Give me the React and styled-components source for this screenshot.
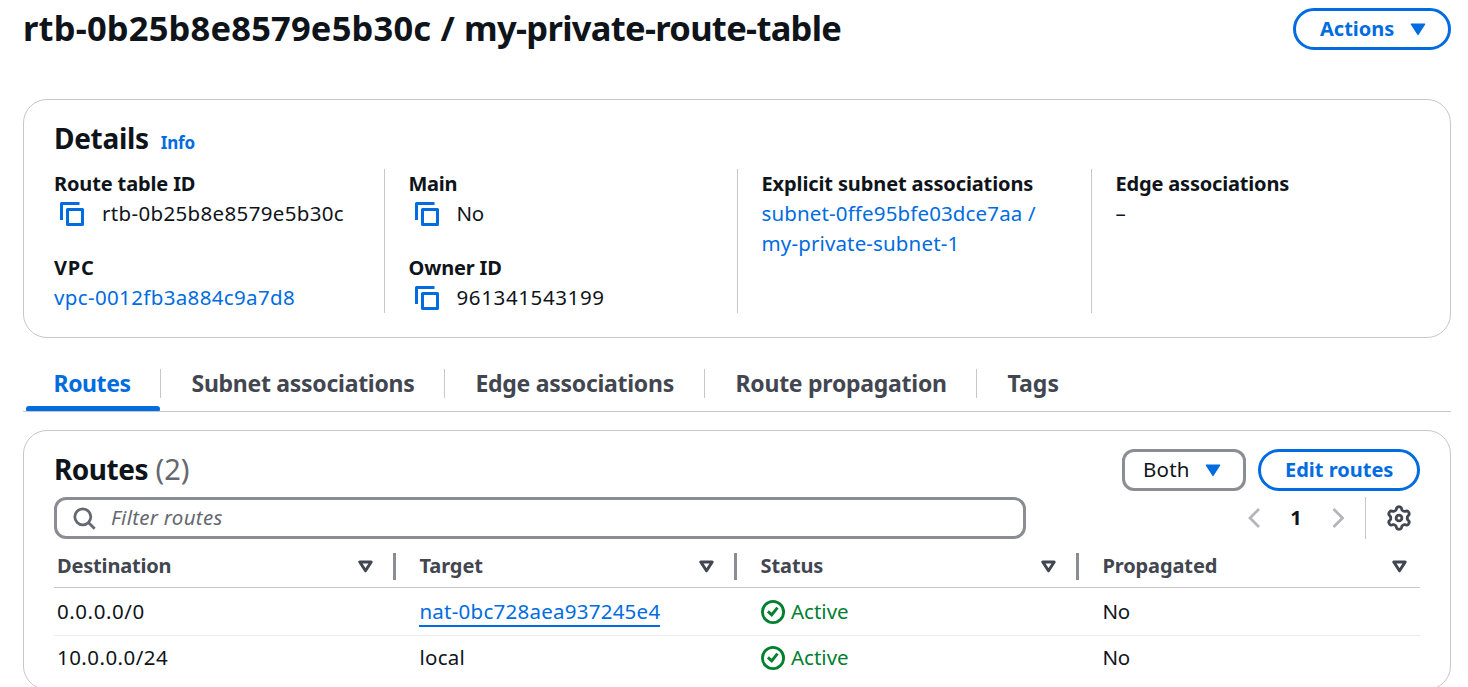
import React from 'react';
import styled, { createGlobalStyle } from 'styled-components';

const color = {
  text: '#0f141a',
  muted: '#424650',
  subtle: '#656871',
  link: '#006ce0',
  border: '#c6c6cd',
  control: '#8c8c94',
  disabled: '#b4b4bb',
  rowLine: '#ebebf0',
  success: '#00802f',
};

const GlobalStyle = createGlobalStyle`
  *, *::before, *::after { box-sizing: border-box; }
  html, body { margin: 0; background: #fff; }
  body {
    font-family: "Noto Sans", "Open Sans", sans-serif;
    font-size: 20.5px;
    line-height: 30px;
    color: ${color.text};
    overflow: hidden;
  }
  svg { display: block; flex: none; }
  button { font: inherit; }
`;

const Page = styled.main`
  width: 1468px;
  height: 687px;
  overflow: hidden;
  padding: 8px 17px 0 23px;
`;

const Spaced = styled.span`
  letter-spacing: ${(p) => p.$ls || 0}px;
  white-space: nowrap;
`;

const PageHeader = styled.header`
  display: flex;
  justify-content: space-between;
  height: 91px;
`;

const PageTitle = styled.h1`
  margin: 0;
  font-size: 34.5px;
  font-weight: 700;
  line-height: 40px;
  white-space: nowrap;
`;

const PillButton = styled.button`
  display: flex;
  align-items: center;
  gap: 16px;
  height: 42px;
  width: ${(p) => p.$width}px;
  padding: 0 0 0 24px;
  border: 3px solid ${color.link};
  border-radius: 21px;
  background: #fff;
  color: ${color.link};
  font-size: 20px;
  font-weight: 700;
`;

const SelectButton = styled(PillButton)`
  padding: 0 0 2px 18px;
  gap: 15px;
  border-color: ${color.control};
  border-radius: 12px;
  color: ${color.text};
  font-size: 20.5px;
  font-weight: 400;
  > svg { margin-top: 2px; }
`;

const Card = styled.section`
  width: 1428px;
  height: ${(p) => p.$height}px;
  border: 1px solid ${color.border};
  border-radius: 24px;
  padding: ${(p) => p.$pad};
`;

const CardTitle = styled.h2`
  display: flex;
  align-items: baseline;
  height: 36px;
  margin: ${(p) => p.$offset || 0}px 0 0;
  font-size: 28px;
  font-weight: 700;
  line-height: 36px;
`;

const InfoLink = styled.a`
  margin-left: 12px;
  font-size: 17px;
  color: ${color.link};
  letter-spacing: -0.2px;
`;

const Counter = styled.span`
  margin-left: 7.5px;
  font-size: 29px;
  font-weight: 400;
  color: ${color.subtle};
`;

const DetailGrid = styled.div`
  display: grid;
  grid-template-columns: 330px 353px 354px 1fr;
  height: 144px;
  margin-top: 13px;
`;

const DetailColumn = styled.div`
  display: flex;
  flex-direction: column;
  gap: 24px;
  &:not(:first-child) {
    border-left: 1px solid ${color.border};
    padding-left: 23.5px;
  }
`;

const DetailLabel = styled.div`
  height: 29px;
  font-size: 20px;
  font-weight: 700;
`;

const DetailValue = styled.div`
  display: flex;
  align-items: flex-start;
  gap: ${(p) => (p.$copy ? 18 : 0)}px;
  padding: 0 0 1px ${(p) => (p.$copy ? 6 : 0)}px;
  > svg { margin-top: 4px; }
`;

const TextLink = styled.a`
  color: ${color.link};
  letter-spacing: ${(p) => p.$ls || 0}px;
  box-shadow: ${(p) => (p.$underlined ? `0 2px 0 ${color.link}` : 'none')};
  line-height: ${(p) => (p.$underlined ? 28 : 30)}px;
`;

const TabBar = styled.nav`
  display: flex;
  width: 1428px;
  height: 60px;
  margin: 14px 0 18px;
  border-bottom: 1px solid ${color.border};
`;

const Tab = styled.a`
  position: relative;
  width: ${(p) => p.$width}px;
  padding: 15px 0 0 30.5px;
  font-size: 23px;
  font-weight: 700;
  line-height: 32px;
  white-space: nowrap;
  letter-spacing: ${(p) => p.$ls}px;
  color: ${(p) => (p.$active ? color.link : color.muted)};
  &:not(:last-child)::before {
    content: '';
    position: absolute;
    right: 0;
    top: 17px;
    width: 1px;
    height: 29px;
    background: ${color.border};
  }
  &::after {
    content: '';
    display: ${(p) => (p.$active ? 'block' : 'none')};
    position: absolute;
    left: 3px;
    right: 1px;
    bottom: 0;
    height: 5px;
    border-radius: 3px 3px 1px 1px;
    background: ${color.link};
  }
`;

const Toolbar = styled.div`
  display: flex;
  justify-content: space-between;
  height: 42px;
`;

const ButtonGroup = styled.div`
  display: flex;
  gap: 12px;
`;

const FilterRow = styled.div`
  display: flex;
  justify-content: space-between;
  height: 42px;
  margin-top: 6px;
`;

const FilterBox = styled.label`
  display: flex;
  align-items: center;
  gap: 15px;
  width: 972px;
  border: 3px solid ${color.control};
  border-radius: 12px;
  padding: 0 0 2px 16px;
  font-style: italic;
  color: ${color.subtle};
  > svg { margin-top: 3px; }
`;

const Pager = styled.div`
  display: flex;
  align-items: center;
  width: 172px;
  font-size: 20px;
  font-weight: 700;
`;

const PageNumber = styled.span`
  width: 72px;
  text-align: center;
`;

const PagerSettings = styled.div`
  display: flex;
  align-items: center;
  height: 42px;
  margin-left: 21px;
  padding-left: 21px;
  border-left: 1px solid ${color.border};
`;

const TableRow = styled.div`
  display: grid;
  grid-template-columns: 341px 341px 342px 342px;
  align-items: center;
  height: ${(p) => p.$height}px;
  padding-top: ${(p) => p.$top || 0}px;
  border-bottom: 1px solid ${(p) => p.$line || 'transparent'};
`;

const HeaderCell = styled.div`
  display: flex;
  align-items: center;
  justify-content: space-between;
  height: 27px;
  padding: 0 ${(p) => (p.$last ? 13.5 : 20)}px 0 ${(p) => (p.$first ? 3 : 24.5)}px;
  border-right: ${(p) => (p.$last ? 'none' : `3px solid ${color.control}`)};
  margin-right: ${(p) => (p.$last ? 0 : -1)}px;
  font-size: 20px;
  font-weight: 700;
  color: ${color.muted};
`;

const Cell = styled.div`
  display: flex;
  align-items: center;
  height: 30px;
  padding: 0 0 2px ${(p) => (p.$first ? 3 : p.$status ? 25 : 24.4)}px;
`;

const Status = styled.span`
  display: flex;
  align-items: center;
  gap: 6px;
  color: ${color.success};
  > svg { margin-top: 2px; }
`;

const Caret = () => (
  <svg width="16" height="13" viewBox="0 0 16 13">
    <path d="M1.4 1.2h13.2L8 11.4z" fill={color.link} stroke={color.link} strokeWidth="1.4" strokeLinejoin="round" />
  </svg>
);

const SortIcon = () => (
  <svg width="15" height="13" viewBox="0 0 15 13">
    <path d="M1.8 2h11.4L7.5 10.8z" fill="none" stroke={color.muted} strokeWidth="3" strokeLinejoin="round" />
  </svg>
);

const CopyIcon = () => (
  <svg width="24" height="24" viewBox="0 0 24 24" fill="none" stroke={color.link} strokeWidth="3" strokeLinejoin="round">
    <path d="M1.5 18V1.5h18" />
    <path d="M7.5 7.5h15v15h-15z" />
  </svg>
);

const SearchIcon = () => (
  <svg width="23" height="23" viewBox="0 0 23 23" fill="none" stroke={color.subtle} strokeWidth="2.8">
    <circle cx="9.8" cy="9.8" r="8" />
    <path d="M15.4 15.4l6.3 6.3" />
  </svg>
);

const Chevron = ({ right }) => (
  <svg width="12" height="20" viewBox="0 0 12 20" fill="none" stroke={color.disabled} strokeWidth="2.7">
    <path d={right ? 'M1.5 1l9 9-9 9' : 'M11 1l-9 9 9 9'} />
  </svg>
);

// Six rounded lobes, one pointing straight up.
const gearOutline = Array.from({ length: 120 }, (_, i) => {
  const a = (i / 120) * Math.PI * 2;
  const r = 9.75 - 1.6 * Math.tanh(1.7 * Math.cos(6 * a));
  return `${(12 + r * Math.cos(a)).toFixed(2)},${(12 + r * Math.sin(a)).toFixed(2)}`;
}).join(' ');

const GearIcon = () => (
  <svg width="24" height="24" viewBox="0 0 24 24" fill="none" stroke={color.muted} overflow="visible">
    <polygon points={gearOutline} strokeWidth="2.8" strokeLinejoin="round" />
    <circle cx="12" cy="12" r="2.9" strokeWidth="2.8" />
  </svg>
);

const CheckIcon = () => (
  <svg width="24" height="24" viewBox="0 0 24 24" fill="none" stroke={color.success}>
    <circle cx="12" cy="12" r="10.6" strokeWidth="2.8" />
    <path d="M6.9 11.4l3.8 3.5 5.8-7.2" strokeWidth="2.9" />
  </svg>
);

const Detail = ({ label, ls, copy, children }) => (
  <div>
    <DetailLabel><Spaced $ls={ls}>{label}</Spaced></DetailLabel>
    <DetailValue $copy={copy}>
      {copy && <CopyIcon />}
      {children}
    </DetailValue>
  </div>
);

const tabs = [
  { name: 'Routes', width: 138, ls: -0.43 },
  { name: 'Subnet associations', width: 284, ls: -0.28 },
  { name: 'Edge associations', width: 260, ls: -0.28 },
  { name: 'Route propagation', width: 272, ls: -0.26 },
  { name: 'Tags', width: 120, ls: 0.05 },
];

const columns = [
  { name: 'Destination', ls: -0.18 },
  { name: 'Target', ls: -0.1 },
  { name: 'Status', ls: -0.1 },
  { name: 'Propagated', ls: -0.12 },
];

const routes = [
  { destination: '0.0.0.0/0', ls: 0.55, target: 'nat-0bc728aea937245e4', linked: true, height: 48, line: color.rowLine },
  { destination: '10.0.0.0/24', ls: 0.45, target: 'local', height: 45 },
];

export default function App() {
  return (
    <>
      <GlobalStyle />
      <Page>
        <PageHeader>
          <PageTitle>
            <Spaced $ls={0.17}>rtb-0b25b8e8579e5b30c / </Spaced>
            <Spaced $ls={-0.7}>my-private-route-table</Spaced>
          </PageTitle>
          <PillButton $width={158}>
            <Spaced>Actions</Spaced>
            <Caret />
          </PillButton>
        </PageHeader>

        <Card $height={239} $pad="20px 30px 0">
          <CardTitle>
            <Spaced $ls={-0.3}>Details</Spaced>
            <InfoLink>Info</InfoLink>
          </CardTitle>
          <DetailGrid>
            <DetailColumn>
              <Detail label="Route table ID" ls={-0.14} copy>
                <Spaced $ls={0.34}>rtb-0b25b8e8579e5b30c</Spaced>
              </Detail>
              <Detail label="VPC" ls={0.8}>
                <TextLink $ls={0.36}>vpc-0012fb3a884c9a7d8</TextLink>
              </Detail>
            </DetailColumn>
            <DetailColumn>
              <Detail label="Main" ls={-0.25} copy>
                <Spaced $ls={-0.3}>No</Spaced>
              </Detail>
              <Detail label="Owner ID" ls={-0.15} copy>
                <Spaced $ls={0.62}>961341543199</Spaced>
              </Detail>
            </DetailColumn>
            <DetailColumn>
              <Detail label="Explicit subnet associations" ls={-0.12}>
                <TextLink $ls={0.14}>
                  subnet-0ffe95bfe03dce7aa /<br />my-private-subnet-1
                </TextLink>
              </Detail>
            </DetailColumn>
            <DetailColumn>
              <Detail label="Edge associations" ls={-0.18}>–</Detail>
            </DetailColumn>
          </DetailGrid>
        </Card>

        <TabBar>
          {tabs.map((t, i) => (
            <Tab key={t.name} $width={t.width} $ls={t.ls} $active={i === 0}>{t.name}</Tab>
          ))}
        </TabBar>

        <Card $height={260} $pad="18px 30px 0">
          <Toolbar>
            <CardTitle $offset={2}>
              <Spaced $ls={-0.5}>Routes</Spaced>
              <Counter>(2)</Counter>
            </CardTitle>
            <ButtonGroup>
              <SelectButton $width={124}>
                <Spaced $ls={0.2}>Both</Spaced>
                <Caret />
              </SelectButton>
              <PillButton $width={162}>
                <Spaced>Edit routes</Spaced>
              </PillButton>
            </ButtonGroup>
          </Toolbar>
          <FilterRow>
            <FilterBox>
              <SearchIcon />
              <Spaced $ls={0.28}>Filter routes</Spaced>
            </FilterBox>
            <Pager>
              <Chevron />
              <PageNumber>1</PageNumber>
              <Chevron right />
              <PagerSettings>
                <GearIcon />
              </PagerSettings>
            </Pager>
          </FilterRow>
          <TableRow $height={49} $top={6} $line={color.border}>
            {columns.map((c, i) => (
              <HeaderCell key={c.name} $first={i === 0} $last={i === columns.length - 1}>
                <Spaced $ls={c.ls}>{c.name}</Spaced>
                <SortIcon />
              </HeaderCell>
            ))}
          </TableRow>
          {routes.map((r) => (
            <TableRow key={r.destination} $height={r.height} $line={r.line}>
              <Cell $first><Spaced $ls={r.ls}>{r.destination}</Spaced></Cell>
              <Cell>
                {r.linked
                  ? <TextLink $underlined $ls={0.25}>{r.target}</TextLink>
                  : <Spaced $ls={0.3}>{r.target}</Spaced>}
              </Cell>
              <Cell $status>
                <Status><CheckIcon /><Spaced>Active</Spaced></Status>
              </Cell>
              <Cell><Spaced $ls={-0.3}>No</Spaced></Cell>
            </TableRow>
          ))}
        </Card>
      </Page>
    </>
  );
}
